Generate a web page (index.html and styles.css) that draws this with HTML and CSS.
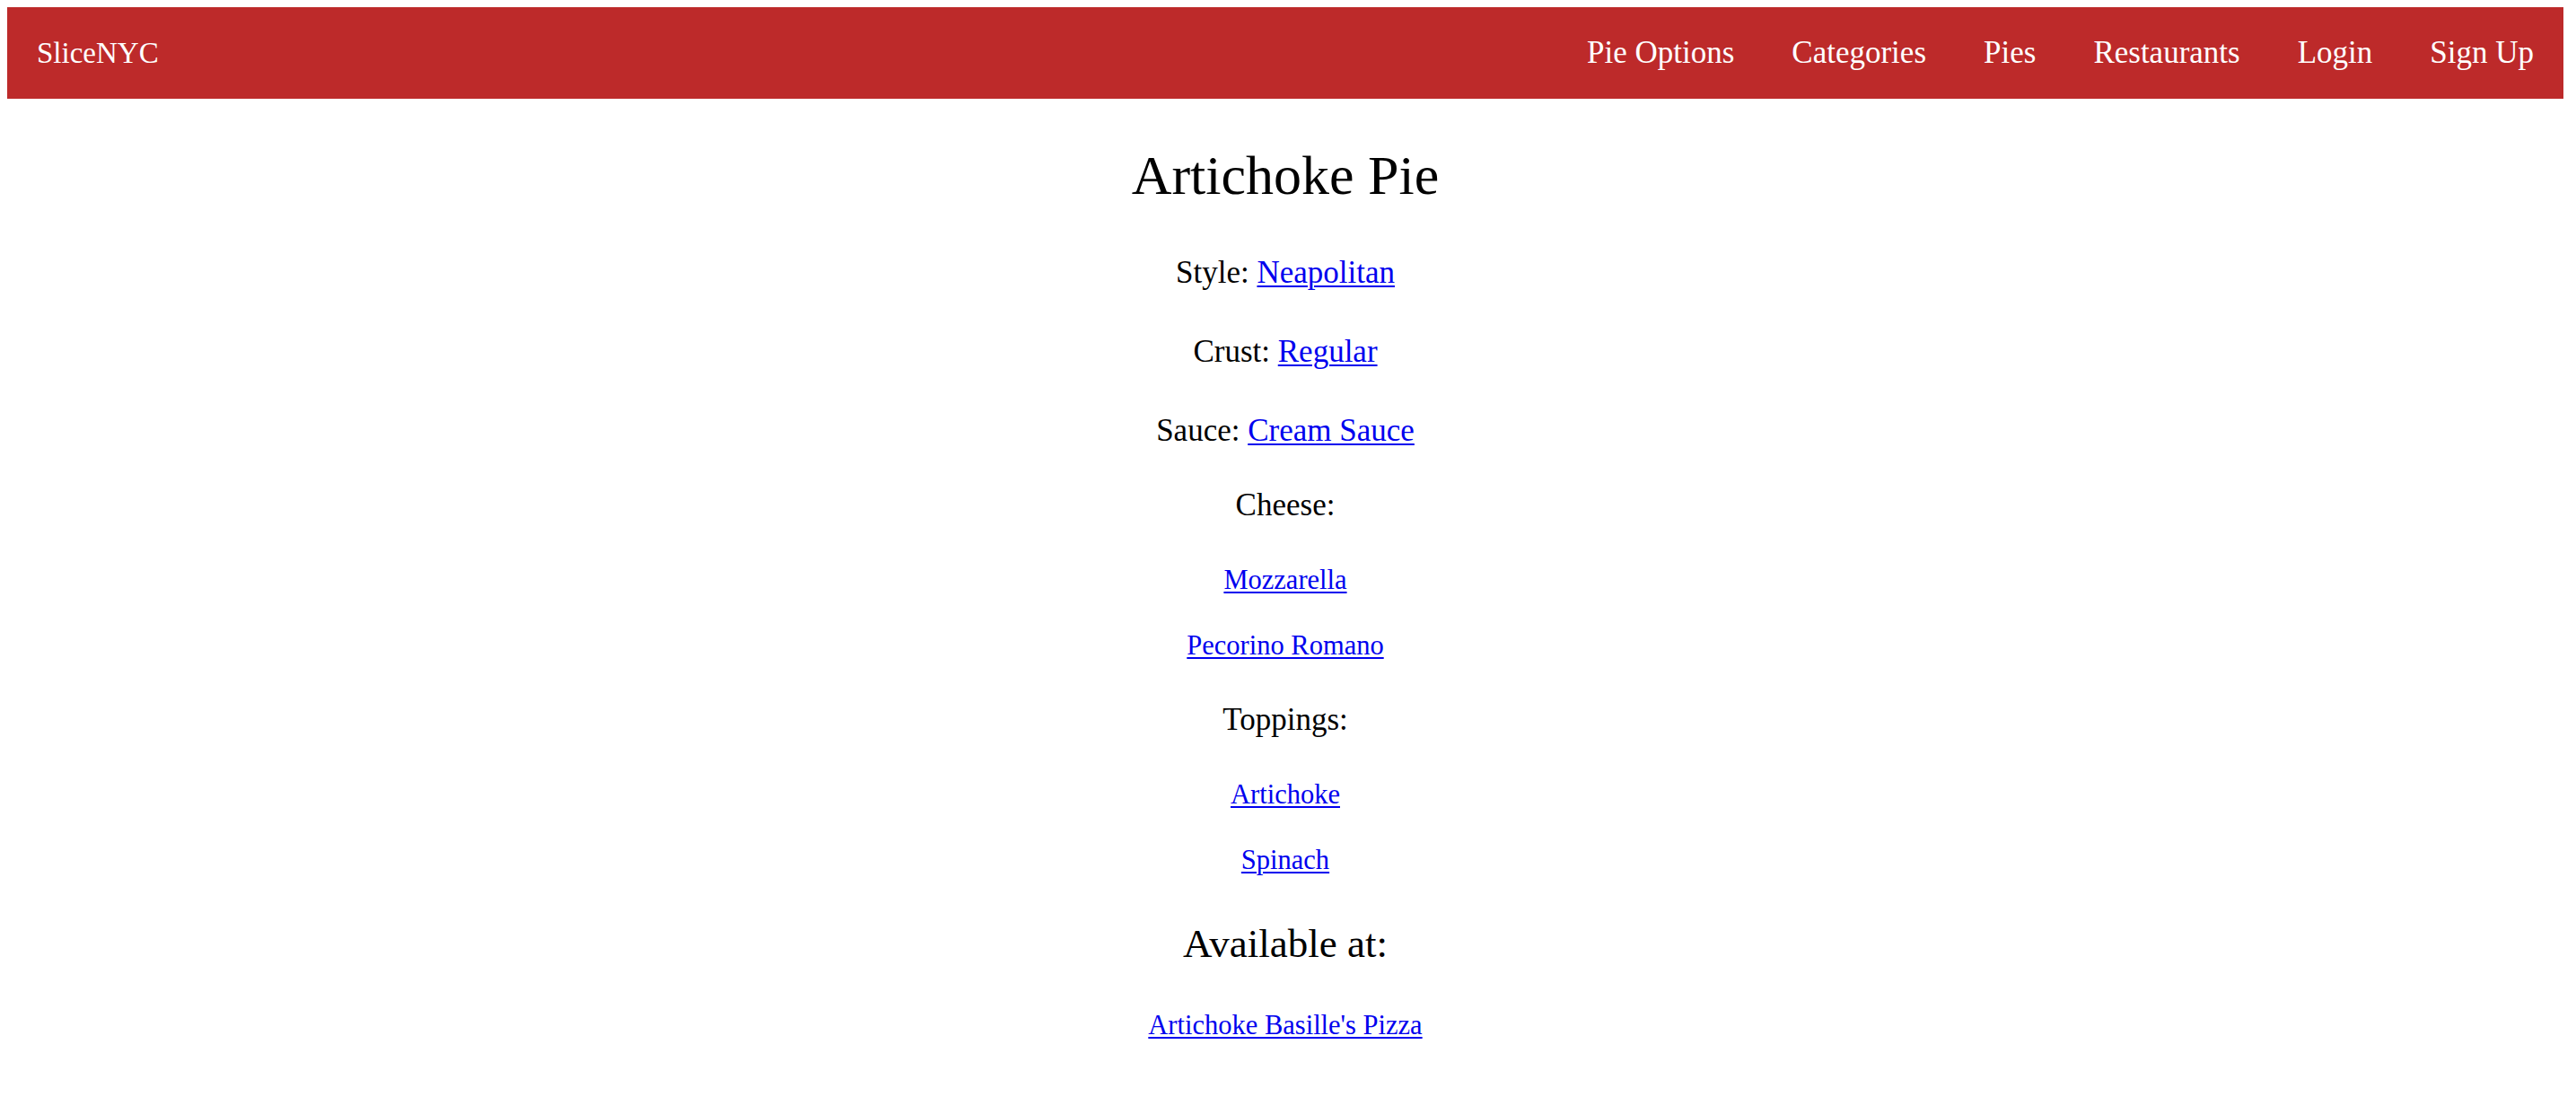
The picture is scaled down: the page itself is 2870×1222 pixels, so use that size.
FILE: index.html
```html
<!DOCTYPE html>
<html lang="en">
<head>
<meta charset="utf-8">
<title>Artichoke Pie - SliceNYC</title>
<link rel="stylesheet" href="styles.css">
</head>
<body>
<nav class="navbar">
  <a class="brand" href="#">SliceNYC</a>
  <div class="nav-links">
    <a href="#">Pie Options</a>
    <a href="#">Categories</a>
    <a href="#">Pies</a>
    <a href="#">Restaurants</a>
    <a href="#">Login</a>
    <a href="#">Sign Up</a>
  </div>
</nav>
<main class="pie">
  <h1 class="pie-title">Artichoke Pie</h1>
  <p class="field first">Style: <a href="#">Neapolitan</a></p>
  <p class="field">Crust: <a href="#">Regular</a></p>
  <p class="field">Sauce: <a href="#">Cream Sauce</a></p>
  <p class="field label label-cheese">Cheese:</p>
  <ul class="links">
    <li><a href="#">Mozzarella</a></li>
    <li><a href="#">Pecorino Romano</a></li>
  </ul>
  <p class="field label">Toppings:</p>
  <ul class="links">
    <li><a href="#">Artichoke</a></li>
    <li><a href="#">Spinach</a></li>
  </ul>
  <h2 class="available">Available at:</h2>
  <ul class="links links-rest">
    <li><a href="#">Artichoke Basille's Pizza</a></li>
  </ul>
</main>
</body>
</html>
```
FILE: styles.css
```css
html, body {
  background: #ffffff;
}

body {
  margin: 8px 14px 8px 8px;
  font-family: "Liberation Serif", "Times New Roman", serif;
  color: #000000;
}

a {
  color: #0000ee;
  text-decoration: underline;
  text-decoration-thickness: 2px;
  text-underline-offset: 3px;
}

.navbar {
  display: flex;
  align-items: center;
  justify-content: space-between;
  height: 102px;
  padding: 0 33px;
  background: #bd2a2a;
}

.navbar a {
  color: #ffffff;
  text-decoration: none;
  font-size: 35px;
  line-height: 40px;
}

.navbar a.brand {
  font-size: 33px;
}

.nav-links {
  display: flex;
  align-items: center;
  gap: 64px;
}

.pie {
  display: flex;
  flex-direction: column;
  align-items: center;
  text-align: center;
  padding-top: 49px;
}

.pie-title {
  margin: 0;
  font-size: 62px;
  line-height: 72px;
  font-weight: normal;
}

.field {
  margin: 40px 0 0;
  font-size: 35px;
  line-height: 48px;
}

.field.first {
  margin-top: 49px;
}

.field.label {
  margin-top: 39px;
}

.field.label-cheese {
  margin-top: 35px;
}

.links {
  list-style: none;
  margin: 39px 0 0;
  padding: 0;
  display: flex;
  flex-direction: column;
  align-items: center;
  gap: 33px;
}

.links li {
  font-size: 30.5px;
  line-height: 40px;
}

.available {
  margin: 47px 0 0;
  font-size: 45px;
  line-height: 52px;
  font-weight: normal;
}

.links.links-rest {
  margin-top: 45px;
}
```
